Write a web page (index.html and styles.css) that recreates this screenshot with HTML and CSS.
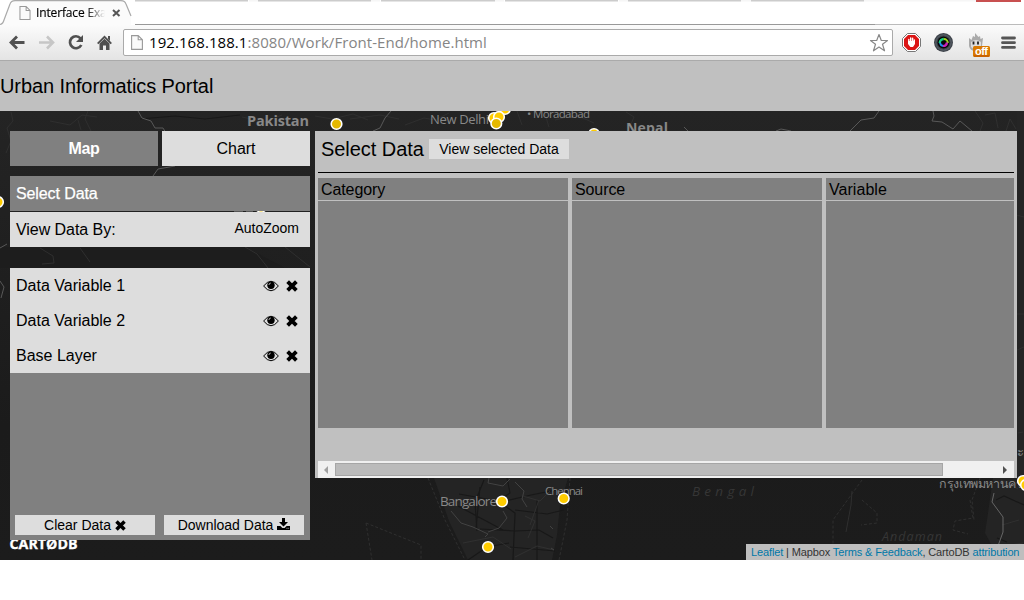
FILE: index.html
```html
<!DOCTYPE html>
<html lang="en">
<head>
<meta charset="utf-8">
<title>Interface Example</title>
<link rel="stylesheet" href="styles.css">
</head>
<body>
<svg class="defs" width="0" height="0">
  <defs>
    <symbol id="eye" viewBox="0 0 16 12"><path d="M.6 6Q8-3.500 15.400 6 8 15.500.6 6Z" fill="none" stroke="#000" stroke-width="1"/><circle cx="8" cy="5.200" r="3.700"/><path d="M5.900 5Q6 3.200 7.800 3" fill="none" stroke="#ddd" stroke-width=".8"/></symbol>
    <symbol id="cross" viewBox="0 0 11 11"><path d="M1.500 1.500l8 8M9.500 1.500l-8 8" stroke="#000" stroke-width="3.500"/></symbol>
    <symbol id="download" viewBox="0 0 13 12"><path d="M5 0h3v4h3L6.500 8.600 2 4h3zM0 8h3.400l2 2h2.200l2-2H13v4H0z"/><path d="M9.500 10.300h1m.8 0h.8" stroke="#ddd" stroke-width=".8"/></symbol>
    <symbol id="page" viewBox="0 0 12 15"><path d="M.6.6h6.600l4.200 4.200v9.600H.6zM7.200.6v4.200h4.200" fill="#fafafa" stroke="#999" stroke-width="1.100"/></symbol>
  </defs>
</svg>

<div class="browser">
  <div class="tabstrip">
    <svg width="1024" height="25" viewBox="0 0 1024 25">
      <path d="M135 .5H248M258 .5h113M381 .5h114M505 .5h113M628 .5h113M751 .5h113" stroke="#ccc" stroke-width="2"/>
      <path d="M249 .5h9M371 .5h9M495 .5h9M619 .5h9M741 .5h10M864 .5h112" stroke="#f6f6f6" stroke-width="2"/>
      <path d="M976 0h45v2h-45z" fill="#c85050"/>
      <path d="M135 24.500H875" stroke="#999"/><path d="M875 24.500h149" stroke="#bbb"/>
      <path d="M0 24.500Q3 24 4 20L10 4Q11 1 15 .7H121Q125 1 126 4L131 16V25H0Z" fill="#fbfbfb"/>
      <path d="M0 24.500Q3 24 4 20L10 4Q11 1 15 .7H121Q125 1 126 4L131 16" fill="none" stroke="#aaa" stroke-width="1.200"/>
    </svg>
    <div class="tab"><svg width="12" height="14"><use href="#page"/></svg><span class="tab-title">Interface Exam</span>
      <svg width="9" height="8"><path d="M1 1l6.500 6M7.500 1L1 7" stroke="#555" stroke-width="2"/></svg></div>
  </div>
  <div class="toolbar">
    <svg class="nav" width="122" height="35" viewBox="0 25 122 35">
      <path d="M24.500 42.500H11.500M17 36.500l-6 6 6 6" fill="none" stroke="#505050" stroke-width="2.800"/>
      <path d="M39 42.500H52M47 36.500l6 6-6 6" fill="none" stroke="#c6c6c6" stroke-width="2.600"/>
      <path d="M80.500 38.300A6 6 0 1 0 81.300 45" fill="none" stroke="#505050" stroke-width="2.700"/><path d="M83 35v7h-7z" fill="#505050"/>
      <path d="M97.700 43.700l6.800-6.900 6.800 6.900" fill="none" stroke="#505050" stroke-width="1.900"/><path d="M99.500 43.500l5-4.800 5 4.800V50H106v-4.500h-3V50h-3.500zM108 36h2v5l-2-2z" fill="#505050"/>
    </svg>
    <div class="address">
      <svg width="12" height="15"><use href="#page"/></svg>
      <span class="url">192.168.188.1<span class="path">:8080/Work/Front-End/home.html</span></span>
      <svg class="star" width="20" height="20" viewBox="0 0 20 20"><path d="M10 1.500l2.300 6h6.200l-5 3.800 2 6.500L10 14l-5.500 3.800 2-6.500-5-3.800h6.200z" fill="#fff" stroke="#888" stroke-width="1.200" stroke-linejoin="round"/></svg>
    </div>
    <svg class="extensions" width="131" height="35" viewBox="893 25 131 35">
      <path d="M907.500 33.500h8l5 5v8l-5 5h-8l-5-5v-8z" fill="#fff" stroke="#777"/>
      <path d="M908 35h7l4 4v7l-4 4h-7l-4-4v-7z" fill="#db1515"/>
      <path d="M908.800 42v-2.500M910.700 42v-4M912.600 42v-3.800M914.300 43v-3" stroke="#fff" stroke-width="1.400" stroke-linecap="round"/><path d="M908 41h7v3l-2 3h-2.600l-2.400-3zM906.800 42l2 3" fill="#fff"/>
      <circle cx="943.500" cy="42.500" r="9.500" fill="#3f444b"/><circle cx="943.500" cy="42.500" r="7.700" fill="none" stroke="#59616a"/><circle cx="943.500" cy="42.500" r="6" fill="#080808"/>
      <path d="M939.800 43a4 4 0 0 1 4-4" stroke="#18cf85" stroke-width="2.400" fill="none"/><path d="M943.800 39a4 4 0 0 1 4 4" stroke="#9fd520" stroke-width="2" fill="none"/><path d="M947 42.500a4 4 0 0 1-4 3.500" stroke="#ca20b8" stroke-width="2.200" fill="none"/><path d="M943 46a4 4 0 0 1-3-3" stroke="#218bf2" stroke-width="2" fill="none"/>
      <path d="M969 38l2.500 2 1.500-4 2 1 0-4 3.500 4 1.500-1 .5 3 2.500-1-1 8q-1 5-6.500 5t-6.500-5z" fill="#aaa"/><path d="M971 42q5-4 10 0v5q-5 5-10 0z" fill="#ddd"/><path d="M973.500 41.500v3m4.500-3v3" stroke="#222" stroke-width="1.800"/>
      <rect x="973" y="46" width="17" height="11" rx="1.500" fill="#d97900"/><path d="M974 56h15" stroke="#b94f00"/>
      <text class="off" x="975" y="55" textLength="13">off</text>
      <path d="M1002.500 38h12M1002.500 42.700h12M1002.500 47.400h12" stroke="#555" stroke-width="2.800" stroke-linecap="round"/>
    </svg>
  </div>
</div>

<header class="site-header"><h1>Urban Informatics Portal</h1></header>

<main class="map">
  <svg class="map-canvas" width="1024" height="449" viewBox="0 111 1024 449">
    <defs><linearGradient id="sea" x2="0" y2="1"><stop offset="0" stop-color="#242424"/><stop offset=".3" stop-color="#202020"/><stop offset=".7" stop-color="#1b1b1b"/><stop offset="1" stop-color="#1c1c1c"/></linearGradient></defs>
    <path d="M0 111h1024v449H0z" fill="url(#sea)"/>
    <path d="M0 247h180l65 0 40 21H0z" fill="#1d1d1d"/>
    <path d="M434 478l15 43 19 39h84l5-25 3-30 8-27zM993 478l-5 35-3 20 15 27h24v-82z" fill="#242424"/>
    <path d="M1017 111h7v367h-7z" fill="#252525"/>
    <g fill="none" stroke="#2f2f2f">
      <path d="M11 112l2 9-6 7 4 13-5 12M50 121l20 4 12-10 15 2M78 120l3 10M88 111l-3 8 6 12M242 117l23 5 17-7"/>
      <path d="M40 248l13 8 1 7-12 1M80 248l10 14M245 247l12 7 11 14M285 247l25 20M315 116l17 3 21-5 15 6M350 119l30-4 19 4M449 113l-14 7-11-2-19 7M517 111l5 14M544 111l5 16M555 120l21-5 18 8M626 112l8 5-6 14"/>
      <path d="M428 478l17 42 20 40M366 523l55 22v15M366 523l6 37M570 478l-3 42-8 40" stroke-dasharray="3 2"/>
      <path d="M862 480l-29 40v40M862 500l15 13v10l-16 2M970 500l3 18-18 3-2 9 15 4M980 478l-8 22 2 20" stroke-dasharray="3 2"/>
      <path d="M852 491l-1 14-5 27M1016 215l8 2M1017 314h7M1017 350l7-3M1018 433l5-1"/>
    </g>
    <g fill="none" stroke="#181818" stroke-width="1.200">
      <path d="M507 478l3 15-12 8 17 12-2 47M498 501l-39-7M501 502l30-7 25-5M515 510l32 4 17-4M515 531l24-1 14 8M510 547l45 4M458 506l45 24M476 529l4-42M537 500v60M480 529l35 2M468 560l19-13 22-4M484 480l-9 22 2 29M996 500l8-4 20 9M997 538l10 4M140 119l35-3 30 3 35-4"/>
    </g>
    <g fill="none" stroke="#343434" stroke-width=".8"><path d="M463 543l30-6 18 12M525 516l10 5-7 17M539 500l-9 25M550 491l-10 10-17-5M515 557l22-11 17 4M1001 480l17 9M1002 525l17-5M998 547l25-4M975 111l8 12-3 8M985 115l10-2 3 15M1006 131l4-12 6 10"/></g>
    <g fill="none" stroke="#585858">
      <path d="M138 111l4 7 9 3 4 7h8l3 5M153 176l5-7 17-3v-5M0 248l7-4M0 281l4 6-3 11M391 111l-6 7-5 10-7 3M850 131l11-11 13-2 5-7M776 131l5-2 10 2M684 127l4 4M933 111l1 5-2 5 10 1 11 7 7-8 12 10"/>
      <path d="M994 493l-2 9 11 15 0 15-10 28" stroke="#666"/>
      <path d="M451 511l10 12 12 4 15 7-3 3M489 478l-1 5 15 3 7-7M515 482l9 9-2 8 5 8M503 511l4 7-8 10-11 4M550 526l3 3M551 548l3 2" stroke="#424242"/>
    </g>
    <g class="labels">
      <text x="247" y="125.500" font-size="14.500" font-weight="700" textLength="62">Pakistan</text><text x="430" y="124" font-size="13" textLength="59">New Delhi</text>
      <text x="527" y="117.500" font-size="11.500" textLength="63">• Moradabad</text><text x="626" y="133" font-size="14" font-weight="700" textLength="42">Nepal</text>
      <text x="440" y="506" font-size="13.500" textLength="57">Bangalore</text><text x="545" y="495" font-size="11.500" textLength="38">Chennai</text>
      <text x="939" y="488" font-size="12.500" textLength="84">กรุงเทพมหานคร</text><text x="1017" y="456" font-size="13">ะ</text>
      <text class="sea" x="692" y="496" font-size="13.500" textLength="62">Bengal</text><text class="sea" x="882" y="541" font-size="12.500" textLength="60">Andaman</text>
      <path d="M234 211h9m3 0h7" stroke="#555" stroke-width="2"/>
    </g>
    <g fill="#fc0" stroke="#fff" stroke-width="1.600"><circle cx="336.500" cy="124" r="5.300" fill="#e5b800"/><circle cx="505" cy="109" r="5.300"/><circle cx="494" cy="118" r="5.300"/><circle cx="499" cy="117" r="5.300"/><circle cx="496.300" cy="123.500" r="5.300" fill="#e5b800"/><circle cx="594" cy="134" r="5.300"/><circle cx="-2" cy="202" r="5.300"/><circle cx="261" cy="216" r="5.300"/><circle cx="502" cy="501.500" r="5.300"/><circle cx="563.700" cy="498.500" r="5.300"/><circle cx="488" cy="547" r="5.300"/><circle cx="1023" cy="481" r="5.300"/><circle cx="1026" cy="485" r="5.300"/></g>
    <text class="cartodb" x="9.500" y="549" textLength="68" lengthAdjust="spacingAndGlyphs">CARTØDB</text>
  </svg>

  <aside class="sidebar">
    <nav class="tabs"><button class="active">Map</button><button>Chart</button></nav>
    <div class="row heading">Select Data</div>
    <div class="row view-by"><span>View Data By:</span><span class="autozoom">AutoZoom</span></div>
    <section class="layers">
      <div class="row layer"><span>Data Variable 1</span><svg width="16" height="12"><use href="#eye"/></svg><svg class="remove" width="12" height="12"><use href="#cross"/></svg></div>
      <div class="row layer"><span>Data Variable 2</span><svg width="16" height="12"><use href="#eye"/></svg><svg class="remove" width="12" height="12"><use href="#cross"/></svg></div>
      <div class="row layer"><span>Base Layer</span><svg width="16" height="12"><use href="#eye"/></svg><svg class="remove" width="12" height="12"><use href="#cross"/></svg></div>
      <footer class="actions"><button class="small">Clear Data<svg width="11" height="11"><use href="#cross"/></svg></button><button class="small">Download Data<svg class="download" width="13" height="12"><use href="#download"/></svg></button></footer>
    </section>
  </aside>

  <section class="selector">
    <div class="selector-head"><h2>Select Data</h2><button class="small">View selected Data</button></div>
    <div class="columns"><div class="column"><h3>Category</h3></div><div class="column"><h3>Source</h3></div><div class="column"><h3>Variable</h3></div></div>
    <div class="scrollbar"><svg width="17" height="17"><path d="M10 5v8L6 9z" fill="#a0a0a0"/></svg><div class="thumb"></div><svg class="right" width="17" height="17"><path d="M6 5v8l4-4z" fill="#505050"/></svg></div>
  </section>
  <div class="attribution"><a>Leaflet</a> | Mapbox <a>Terms &amp; Feedback</a>, CartoDB <a>attribution</a></div>
</main>
</body>
</html>
```
FILE: styles.css
```css
* { box-sizing: border-box; }
body { margin: 0; background: #fff; color: #000; font: 16px/1 "Liberation Sans", Arial, sans-serif; }
svg { display: block; flex: none; }
.defs { position: absolute; }
button { border: 0; padding: 0; color: #000; font: inherit; background: #ddd; }
h1, h2, h3 { margin: 0; font-weight: 400; }
.browser { height: 61px; }
.tabstrip { height: 25px; position: relative; }
.tab { position: absolute; left: 19px; top: 6px; display: flex; align-items: center; height: 14px; }
.tab-title { width: 69px; margin: 0 5px; padding-left: 0; overflow: hidden; white-space: nowrap; font: 12px/14px "Open Sans", "Noto Sans", sans-serif; letter-spacing: -.15px; -webkit-mask-image: linear-gradient(90deg, #000 72%, transparent); mask-image: linear-gradient(90deg, #000 72%, transparent); -webkit-text-stroke: .15px #000; }
.tab > svg:last-child { margin-left: 2px; }
.toolbar { height: 36px; display: flex; align-items: flex-start; background: linear-gradient(#fbfbfb, #e4e4e4); border-bottom: 1px solid #aaa; }
.nav { margin-right: 1px; }
.address { width: 770px; height: 27px; margin-top: 4px; padding: 0 3px 0 7px; display: flex; align-items: center; background: #fff; border: 1px solid #aaa; border-radius: 2px; }
.url { margin: -2px 0 0 6px; font: 15px/20px "Open Sans", "Noto Sans", sans-serif; letter-spacing: .07px; white-space: nowrap; }
.path { color: #858585; }
.star { margin-left: auto; }
.off { font: bold 11px "Liberation Sans", sans-serif; fill: #fff; }
.site-header { height: 50px; background: #c0c0c0; display: flex; align-items: center; }
.site-header h1 { font-size: 20px; letter-spacing: -.1px; white-space: nowrap; }
.map { height: 449px; position: relative; overflow: hidden; background: #222; }
.labels { font-family: "Open Sans", "Noto Sans", sans-serif; fill: #888; }
.labels .sea { font-style: italic; fill: #363636; }
.cartodb { font: bold 14px "Open Sans", sans-serif; fill: #fff; stroke: #fff; stroke-width: .3px; }
.sidebar { position: absolute; left: 10px; top: 20px; width: 300px; }
.tabs { display: grid; grid-template-columns: 1fr 1fr; gap: 4px; height: 35px; margin-bottom: 10px; }
.tabs .active { background: #808080; color: #fff; font-weight: 700; letter-spacing: -.3px; }
.row { height: 35px; padding: 0 6px; display: flex; align-items: center; background: #ddd; }
.heading { background: #808080; color: #fff; margin-bottom: 1px; letter-spacing: -.1px; -webkit-text-stroke: .25px #fff; }
.view-by { justify-content: space-between; letter-spacing: -.05px; }
.autozoom { font-size: 14px; margin: -3px 5px 0 0; letter-spacing: 0; }
.layers { height: 272px; margin-top: 21px; background: #808080; display: flex; flex-direction: column; }
.layer span { flex: 1; }
.remove { margin: 1px 6px 0 7px; }
.actions { display: flex; gap: 9px; margin-top: auto; padding: 0 5px 5px; }
.small { width: 140px; height: 20px; display: flex; justify-content: center; align-items: center; gap: 4px; font-size: 14px; white-space: nowrap; }
.download { margin-top: -2px; }
.selector { position: absolute; left: 315px; top: 20px; width: 702px; height: 347px; padding: 0 3px; background: #c0c0c0; display: flex; flex-direction: column; }
.selector-head { height: 42px; border-bottom: 1px solid #000; padding: 8px 3px 0; display: flex; gap: 5px; }
.selector-head h2 { font-size: 20px; line-height: 20px; width: 103px; letter-spacing: -.05px; white-space: nowrap; }
.columns { display: grid; grid-template-columns: 250px 250px 188px; gap: 4px; height: 250px; margin-top: 5px; }
.column { background: #808080; }
.column h3 { height: 23px; padding: 3px; border-bottom: 1px solid #c0c0c0; font-size: 16px; line-height: 17px; letter-spacing: -.1px; }
.column:last-child h3 { letter-spacing: .05px; }
.scrollbar { height: 17px; margin-top: auto; background: #f0f0f0; display: flex; align-items: center; }
.thumb { width: 608px; height: 13px; background: #bbb; border: 1px solid #a6a6a6; }
.right { margin-left: auto; }
.attribution { position: absolute; right: 0; bottom: 0; width: 278px; height: 16px; padding: 0 5px; background: #bebebe; color: #333; font-size: 11px; line-height: 16px; white-space: nowrap; letter-spacing: -.13px; }
.attribution a { color: #0078a8; }
```
